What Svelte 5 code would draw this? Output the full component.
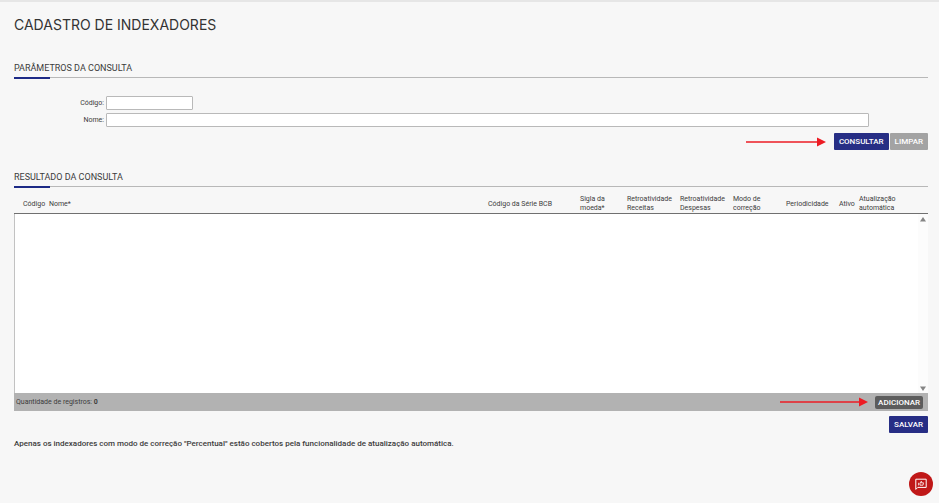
<script>
  let codigo = $state('');
  let nome = $state('');
  let registros = $state([]);

  const colunas = [
    { classe: 'c-codigo', texto: 'Código' },
    { classe: 'c-nome', texto: 'Nome*' },
    { classe: 'c-serie', texto: 'Código da Série BCB' },
    { classe: 'c-sigla', texto: 'Sigla da moeda*' },
    { classe: 'c-retro', texto: 'Retroatividade Receitas' },
    { classe: 'c-retro', texto: 'Retroatividade Despesas' },
    { classe: 'c-modo', texto: 'Modo de correção' },
    { classe: 'c-periodo', texto: 'Periodicidade' },
    { classe: 'c-ativo', texto: 'Ativo' },
    { classe: 'c-atual', texto: 'Atualização automática' }
  ];

  function limpar() {
    codigo = '';
    nome = '';
  }
</script>

{#snippet seta(largura)}
  <svg class="seta" width={largura} height="10" viewBox="0 0 {largura} 10" aria-hidden="true">
    <path d="M0 5H{largura - 8}" stroke="#ed1c24" stroke-width="1.5" />
    <path d="M{largura - 9} .5L{largura} 5L{largura - 9} 9.5Z" fill="#ed1c24" />
  </svg>
{/snippet}

<main>
  <h1>CADASTRO DE INDEXADORES</h1>

  <section>
    <h2>PARÂMETROS DA CONSULTA</h2>
    <form onsubmit={(e) => e.preventDefault()}>
      <div class="campo">
        <label for="codigo">Código:</label>
        <input id="codigo" class="curto" type="text" bind:value={codigo} />
      </div>
      <div class="campo">
        <label for="nome">Nome:</label>
        <input id="nome" type="text" bind:value={nome} />
      </div>
      <div class="acoes">
        {@render seta(80)}
        <button class="primario" type="submit">CONSULTAR</button>
        <button class="neutro" type="button" onclick={limpar}>LIMPAR</button>
      </div>
    </form>
  </section>

  <section class="resultado">
    <h2>RESULTADO DA CONSULTA</h2>
    <table>
      <thead>
        <tr>
          {#each colunas as coluna}
            <th class={coluna.classe} scope="col">{coluna.texto}</th>
          {/each}
        </tr>
      </thead>
    </table>
    <div class="lista">
      <div class="rolagem" aria-hidden="true">
        <svg width="6" height="5" viewBox="0 0 6 5"><path d="M3 0L6 4.5H0Z" fill="#858585" /></svg>
        <svg width="6" height="5" viewBox="0 0 6 5"><path d="M0 .5H6L3 5Z" fill="#858585" /></svg>
      </div>
    </div>
    <div class="rodape">
      <span class="total">Quantidade de registros: <b>{registros.length}</b></span>
      {@render seta(88)}
      <button class="adicionar" type="button">ADICIONAR</button>
    </div>
    <div class="salvar">
      <button class="primario" type="button">SALVAR</button>
    </div>
  </section>

  <p>Apenas os indexadores com modo de correção "Percentual" estão cobertos pela funcionalidade de atualização automática.</p>
</main>

<button class="flutuante" type="button" aria-label="Enviar comentário">
  <svg width="12" height="12" viewBox="0 0 12 12" fill="none" stroke="#fff" stroke-width="1" aria-hidden="true">
    <path d="M.8 11.4V1.2H11.2V9.4H2.8Z" stroke-linejoin="round" />
    <path d="M3.6 4.8V7.4M5 7.2V5L6.4 3.2L6.3 4.8H8.5L8 7.2Z" stroke-width=".8" />
  </svg>
</button>

<style>
  :global(body) {
    margin: 0;
    background: #f7f7f7;
  }

  main {
    box-sizing: border-box;
    border-top: 2px solid #e6e6e6;
    padding: 14px 11px 0 14px;
    font-family: Roboto, "Liberation Sans", sans-serif;
    font-size: 7px;
    line-height: 9px;
    color: #3c3c3c;
  }

  h1 {
    margin: 0 0 28px;
    font: 400 14px/18px Inter, "Liberation Sans", sans-serif;
    color: #333;
  }

  h2 {
    position: relative;
    margin: 0;
    padding-bottom: 3px;
    border-bottom: 1px solid #b8b8b8;
    font-size: 9px;
    font-weight: 400;
    line-height: 12px;
  }

  h2::after {
    content: "";
    position: absolute;
    left: 0;
    bottom: -2px;
    width: 36px;
    height: 2px;
    background: #1d2a86;
  }

  form {
    display: flex;
    flex-direction: column;
    gap: 3px;
    padding-top: 18px;
  }

  .campo {
    display: flex;
    align-items: center;
    gap: 2px;
    padding-right: 59px;
  }

  label {
    width: 90px;
    flex: none;
    text-align: right;
  }

  input {
    box-sizing: border-box;
    flex: 1;
    min-width: 0;
    height: 14px;
    padding: 0 3px;
    border: 1px solid #b9b9b9;
    border-radius: 1px;
    background: #fff;
    font: inherit;
  }

  .curto {
    flex: 0 0 87px;
  }

  .acoes {
    display: flex;
    align-items: center;
    justify-content: flex-end;
    gap: 1px;
    padding-top: 3px;
  }

  .seta {
    flex: none;
    margin-right: 7px;
  }

  button {
    height: 17px;
    padding: 0 5px;
    border: 0;
    border-radius: 1px;
    color: #fff;
    font: 500 8px/17px Roboto, "Liberation Sans", sans-serif;
    cursor: pointer;
  }

  .primario {
    background: #272e85;
  }

  .neutro {
    background: #a3a3a3;
  }

  .resultado {
    padding-top: 21px;
  }

  table {
    width: 100%;
    margin-top: 8px;
    border-collapse: collapse;
    table-layout: fixed;
    border-bottom: 1px solid #707070;
  }

  th {
    height: 18px;
    padding: 0;
    font-weight: 400;
    text-align: left;
    vertical-align: middle;
  }

  .c-codigo { width: 26px; padding-left: 9px; }
  .c-serie { width: 92px; }
  .c-sigla { width: 30px; padding-right: 17px; }
  .c-retro { width: 53px; }
  .c-modo { width: 36px; padding-right: 17px; }
  .c-periodo { width: 53px; }
  .c-ativo { width: 20px; }
  .c-atual { width: 45px; padding-right: 24px; }

  .lista {
    display: flex;
    justify-content: flex-end;
    height: 179px;
    border-left: 1px solid #c2c2c2;
    background: #fff;
  }

  .rolagem {
    display: flex;
    flex-direction: column;
    align-items: center;
    justify-content: space-between;
    width: 10px;
    padding: 3px 0 2px;
    background: #fcfcfc;
  }

  .rodape {
    display: flex;
    align-items: center;
    height: 18px;
    padding: 0 5px 0 2px;
    background: #b2b2b2;
  }

  .total {
    flex: 1;
  }

  .adicionar {
    height: 13px;
    padding: 0 3px;
    border-radius: 2px;
    background: #5c5c5c;
    line-height: 13px;
  }

  .salvar {
    display: flex;
    justify-content: flex-end;
    padding-top: 5px;
  }

  p {
    margin: 6px 0 0;
    font-size: 8px;
    font-weight: 500;
  }

  .flutuante {
    position: fixed;
    right: 6px;
    bottom: 7px;
    display: flex;
    align-items: center;
    justify-content: center;
    width: 24px;
    height: 24px;
    padding: 0;
    border-radius: 50%;
    background: #c01818;
  }
</style>
